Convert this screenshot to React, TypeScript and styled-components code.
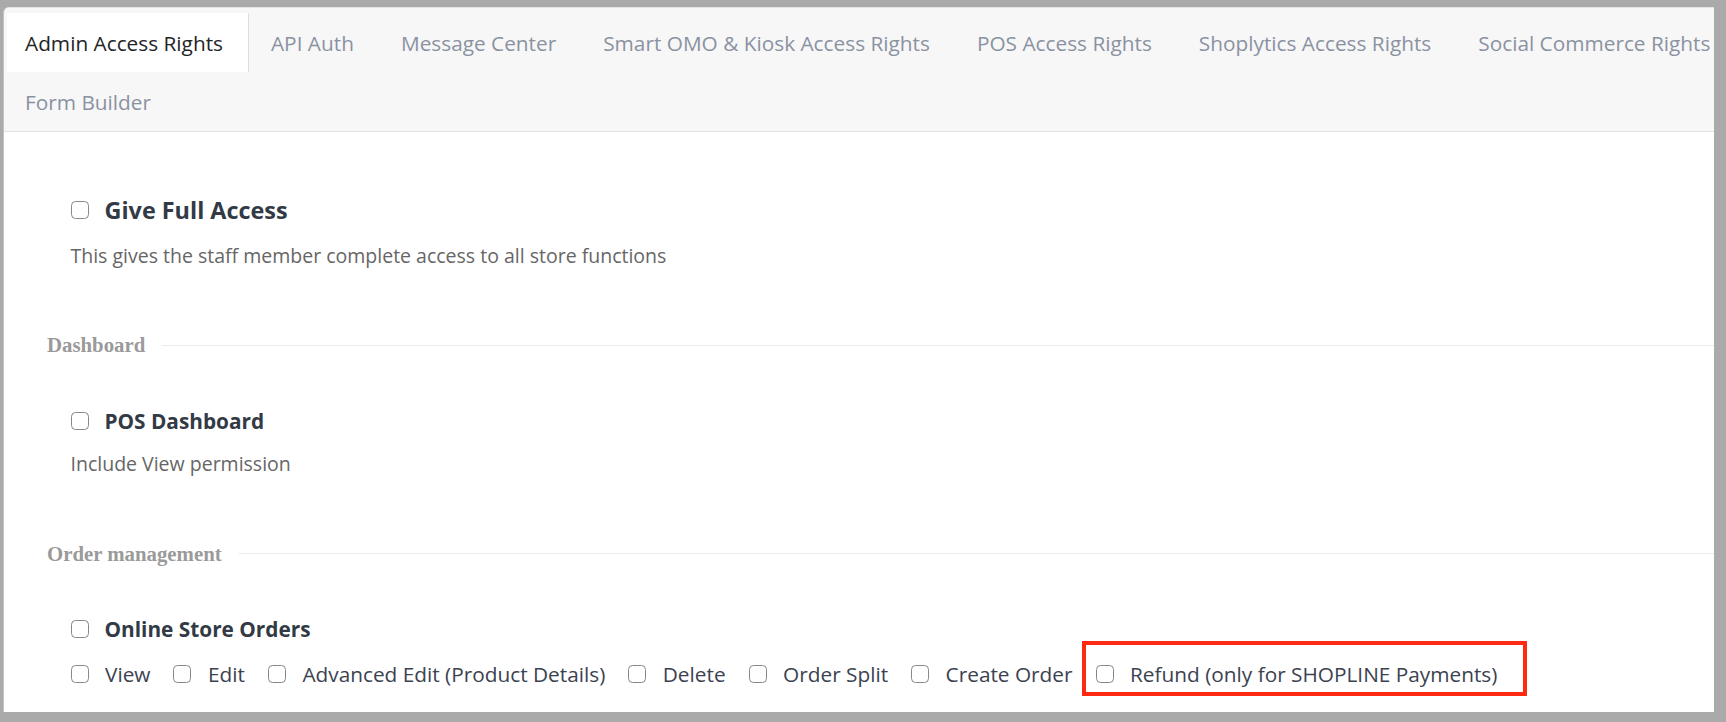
import React from "react";
import styled, { createGlobalStyle } from "styled-components";

const Global = createGlobalStyle`
  html, body { margin: 0; padding: 0; background: #aaaaaa; }
  body { font-family: "Open Sans", "Liberation Sans", sans-serif; }
  * { box-sizing: border-box; }
`;

const Frame = styled.div`
  width: 1726px;
  height: 722px;
  padding: 7px 12px 10px 3px;
  background: #aaaaaa;
  overflow: hidden;
`;

const Panel = styled.div`
  height: 100%;
  background: #ffffff;
  border-left: 1px solid #c2c2c2;
  border-top: 1px solid #e4e4e4;
  border-top-left-radius: 6px;
  overflow: hidden;
`;

const TabBar = styled.div`
  background: #f7f7f7;
  border-bottom: 1px solid #e3e3e3;
  padding: 5px 0 0 3px;
`;

const TabList = styled.div`
  display: flex;
  flex-wrap: wrap;
  width: 1760px;
`;

const Tab = styled.div<{ $active?: boolean }>`
  height: 59px;
  display: flex;
  align-items: center;
  padding: 0 23px 0 18px;
  margin-right: 5px;
  font-size: 20.8px;
  white-space: nowrap;
  color: ${(p) => (p.$active ? "#222426" : "#8a92a2")};
  background: ${(p) => (p.$active ? "#ffffff" : "transparent")};
  border-right: 1px solid ${(p) => (p.$active ? "#dedede" : "transparent")};

  &:first-child {
    padding-right: 25px;
    margin-right: 4px;
  }
`;

const Content = styled.div`
  padding: 62px 0 0 43px;
`;

const Block = styled.div`
  margin-left: 23.5px;
  margin-bottom: 61.5px;
`;

const HeadingRow = styled.label<{ $big?: boolean }>`
  display: flex;
  align-items: center;
  gap: 16px;
  height: ${(p) => (p.$big ? "32px" : "28px")};
  font-size: ${(p) => (p.$big ? "23.4px" : "20.8px")};
  font-weight: 700;
  color: #323a45;
`;

const Description = styled.div`
  margin-top: 15.5px;
  font-size: 19.5px;
  line-height: 28px;
  color: #666666;
`;

const SectionHeader = styled.div`
  display: flex;
  align-items: center;
  gap: 17px;
  height: 28px;
  margin-bottom: 47.5px;
`;

const SectionTitle = styled.span`
  font-family: "Liberation Serif", "Times New Roman", serif;
  font-weight: 700;
  font-size: 20.8px;
  color: #9a9a9a;
  white-space: nowrap;
`;

const Rule = styled.div`
  flex: 1;
  height: 1px;
  background: #ebebeb;
`;

const Options = styled.div`
  display: flex;
  align-items: center;
  margin-top: 16.5px;
`;

const Option = styled.label<{ $highlight?: boolean }>`
  position: relative;
  display: flex;
  align-items: center;
  gap: 16.5px;
  margin-right: 23px;
  font-size: 20.8px;
  line-height: 28px;
  color: #3b4250;
  white-space: nowrap;
  ${(p) =>
    p.$highlight
      ? `
    &::after {
      content: "";
      position: absolute;
      left: -13.5px;
      right: -30px;
      top: -19px;
      bottom: -8px;
      border: 4px solid #fb2a10;
      pointer-events: none;
    }
  `
      : ""}
`;

const Box = styled.input.attrs({ type: "checkbox" })`
  appearance: none;
  -webkit-appearance: none;
  width: 18px;
  height: 18px;
  margin: 0;
  flex-shrink: 0;
  background: #ffffff;
  border: 1.3px solid #878787;
  border-radius: 4.5px;
`;

const tabs = [
  "Admin Access Rights",
  "API Auth",
  "Message Center",
  "Smart OMO & Kiosk Access Rights",
  "POS Access Rights",
  "Shoplytics Access Rights",
  "Social Commerce Rights",
  "Form Builder",
];

const orderOptions = [
  "View",
  "Edit",
  "Advanced Edit (Product Details)",
  "Delete",
  "Order Split",
  "Create Order",
  "Refund (only for SHOPLINE Payments)",
];

export default function App() {
  return (
    <>
      <Global />
      <Frame>
        <Panel>
          <TabBar>
            <TabList>
              {tabs.map((t, i) => (
                <Tab key={t} $active={i === 0}>
                  {t}
                </Tab>
              ))}
            </TabList>
          </TabBar>
          <Content>
            <Block>
              <HeadingRow $big>
                <Box />
                Give Full Access
              </HeadingRow>
              <Description>This gives the staff member complete access to all store functions</Description>
            </Block>

            <SectionHeader>
              <SectionTitle>Dashboard</SectionTitle>
              <Rule />
            </SectionHeader>
            <Block>
              <HeadingRow>
                <Box />
                POS Dashboard
              </HeadingRow>
              <Description>Include View permission</Description>
            </Block>

            <SectionHeader>
              <SectionTitle>Order management</SectionTitle>
              <Rule />
            </SectionHeader>
            <Block>
              <HeadingRow>
                <Box />
                Online Store Orders
              </HeadingRow>
              <Options>
                {orderOptions.map((o, i) => (
                  <Option key={o} $highlight={i === orderOptions.length - 1}>
                    <Box />
                    {o}
                  </Option>
                ))}
              </Options>
            </Block>
          </Content>
        </Panel>
      </Frame>
    </>
  );
}
